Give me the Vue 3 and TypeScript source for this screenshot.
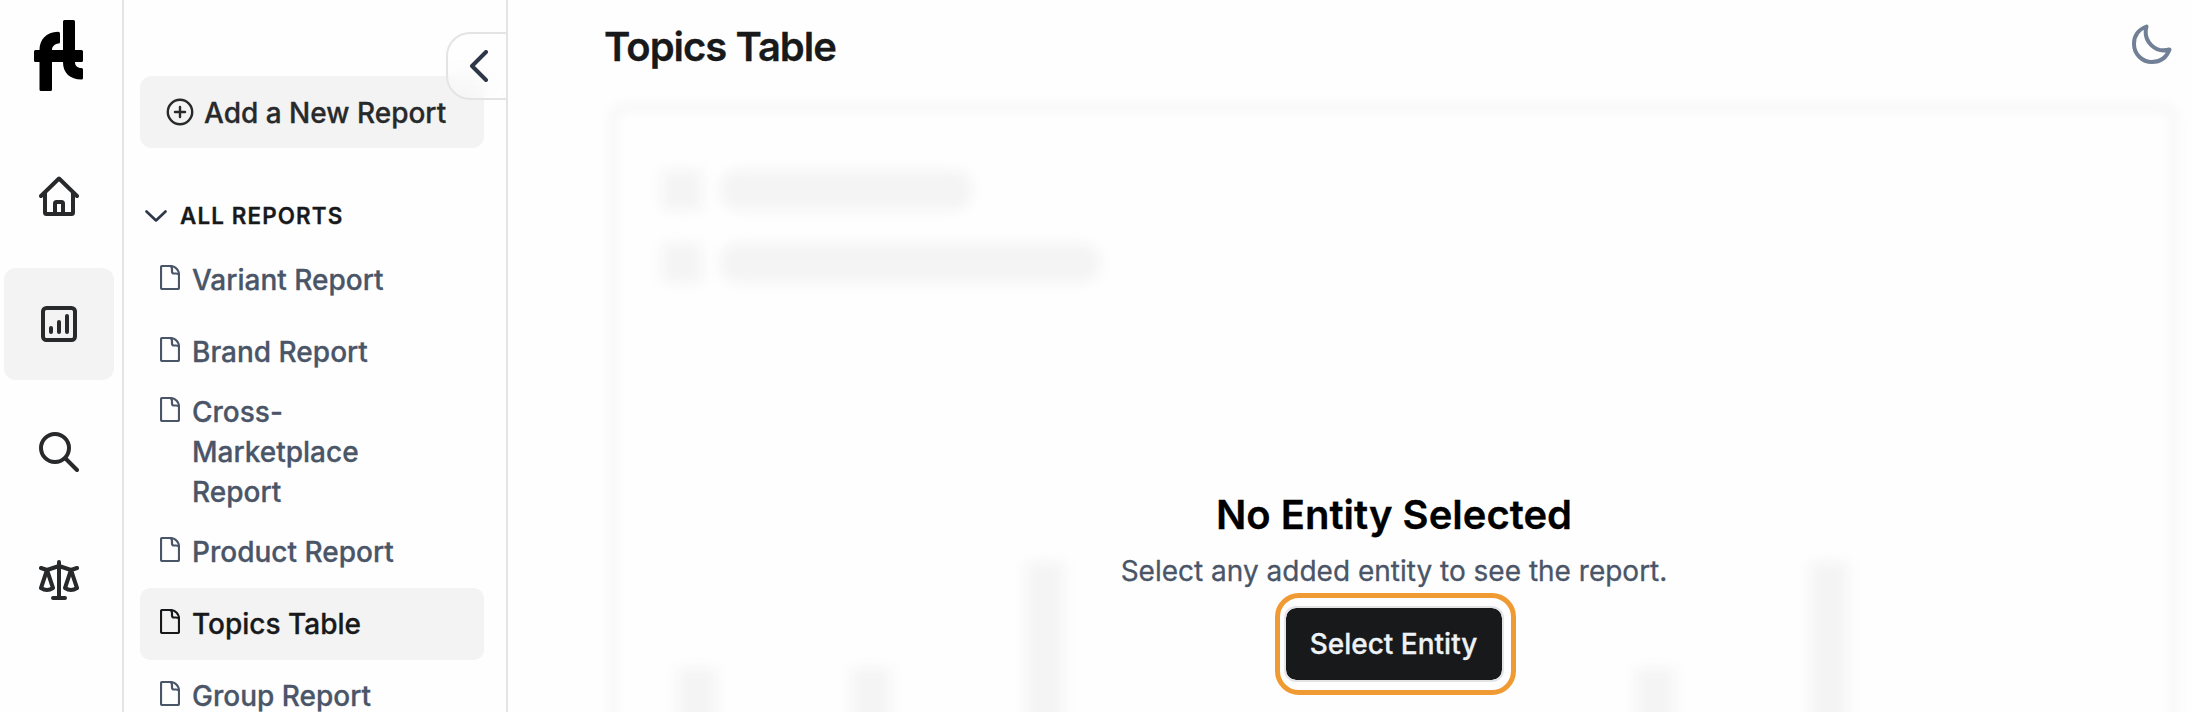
<script setup lang="ts">
interface Report {
  name: string
  active?: boolean
}

const reports: Report[] = [
  { name: 'Variant Report' },
  { name: 'Brand Report' },
  { name: 'Cross-Marketplace Report' },
  { name: 'Product Report' },
  { name: 'Topics Table', active: true },
  { name: 'Group Report' },
]

// Heights of the placeholder chart's columns
const columns: number[] = [
  231, 60, 231, 60, 337, 60, 120, 60, 120, 60, 120, 231, 60, 337, 60, 120, 60,
]
</script>

<template>
  <div class="app">
    <nav class="rail">
      <svg class="logo" viewBox="0 0 49 71" aria-label="Logo">
        <path d="M7 71Q5.500 71 5.500 69.500V42H1.500Q0 42 0 40.500V31.500Q0 30 1.500 30H5.500C5.500 20 12 12 24 11.800Q26 11.800 26 13.500V22Q26 23.500 24.500 23.500C20.500 24 18 26.500 18 30H29V1.500Q29 0 30.500 0H39.500Q41 0 41 1.500V30H47.500Q49 30 49 31.500V40.500Q49 42 47.500 42H41C41 45.500 43 48 47.500 48Q49 48 49 49.500V58Q49 59.500 47.500 59.500C36 59.500 29 53 29 42H18V69.500Q18 71 16.500 71Z" />
      </svg>
      <a class="rail-item">
        <svg viewBox="0 0 40 40">
          <path d="M2 20 20 2.500 38 20M6 17V36.500Q6 38 7.500 38H32.500Q34 38 34 36.500V17" />
          <path d="M16 38V27.500Q16 26 17.500 26H22.500Q24 26 24 27.500V38" />
        </svg>
      </a>
      <a class="rail-item active">
        <svg viewBox="0 0 40 40">
          <rect x="4" y="4" width="32" height="32" rx="3.500" />
          <path d="M12 24V28M20 18V28M28 12V28" />
        </svg>
      </a>
      <a class="rail-item">
        <svg viewBox="0 0 40 40">
          <circle cx="16" cy="16" r="14" />
          <path d="M26.500 26.500 38 38" />
        </svg>
      </a>
      <a class="rail-item">
        <svg viewBox="0 0 40 40">
          <path d="M20 2V38M14 38H26M2 8 8 10 20 6 32 10 38 8" />
          <path d="M8 10 2 28Q8 32 14 28ZM32 10 26 28Q32 32 38 28Z" />
        </svg>
      </a>
    </nav>

    <aside class="sidebar">
      <button class="add">
        <svg viewBox="0 0 28 28">
          <circle cx="14" cy="14" r="12.200" />
          <path d="M14 9V19M9 14H19" />
        </svg>
        <span>Add a New Report</span>
      </button>
      <div class="group">
        <svg viewBox="0 0 22 12"><path d="M1.500 1.500 11 10.500 20.500 1.500" /></svg>
        <span>ALL REPORTS</span>
      </div>
      <ul class="reports">
        <li v-for="r in reports" :key="r.name" :class="{ active: r.active }">
          <svg viewBox="0 0 20 25">
            <path d="M2.500 1H11C15.500 1.500 19 5 19 9.500V22.500Q19 24 17.500 24H2.500Q1 24 1 22.500V2.500Q1 1 2.500 1Z" />
            <path d="M10 1Q12 1.500 12 4V6.500Q12 8.500 14 8.500H16Q18.500 8.500 19 10" />
          </svg>
          <span>{{ r.name }}</span>
        </li>
      </ul>
      <button class="collapse" aria-label="Collapse">
        <svg viewBox="0 0 18 32"><path d="M16 2 2 16 16 30" /></svg>
      </button>
    </aside>

    <main class="main">
      <header>
        <h1>Topics Table</h1>
        <svg class="moon" viewBox="0 0 40 40">
          <path d="M14.500 2.500C6.500 5.500 2 12 2 20C2 30 10 38 20 38C28 38 34.500 33.500 37.500 25.500C23.500 29.500 10.500 17.500 14.500 2.500Z" />
        </svg>
      </header>
      <section class="stage">
        <div class="skeleton">
          <div class="line"><i class="box" /><i class="bar short" /></div>
          <div class="line"><i class="box" /><i class="bar long" /></div>
          <div class="chart">
            <i v-for="(h, i) in columns" :key="i" :style="{ height: h + 'px' }" />
          </div>
        </div>
        <div class="empty">
          <h2>No Entity Selected</h2>
          <p>Select any added entity to see the report.</p>
          <div class="ring"><button>Select Entity</button></div>
        </div>
      </section>
    </main>
  </div>
</template>

<style>
html, body { overflow: hidden; background: #fefefe; }
</style>

<style scoped>
* { box-sizing: border-box; margin: 0; padding: 0; }
.app {
  display: flex;
  width: 2192px;
  height: 712px;
  overflow: hidden;
  background: #fefefe;
  font-family: Inter, "Liberation Sans", sans-serif;
  font-size: 28px;
  line-height: 40px;
  -webkit-text-stroke: 0.300px currentColor;
}
button { font: inherit; border: 0; }
svg { display: block; flex: none; fill: none; stroke: currentColor; stroke-linecap: round; stroke-linejoin: round; }

.rail {
  display: flex;
  flex-direction: column;
  flex: none;
  gap: 16px;
  width: 124px;
  padding: 20px 8px 0 4px;
  border-right: 2px solid #e4e4e4;
}
.logo { width: 49px; height: 71px; margin: 0 0 33px 30px; fill: #000; stroke: none; }
.rail-item {
  display: flex;
  align-items: center;
  justify-content: center;
  width: 110px;
  height: 112px;
  border-radius: 12px;
  color: #28292b;
}
.rail-item.active { background: #f3f3f3; }
.rail-item svg { width: 40px; height: 40px; stroke-width: 4; }

.sidebar {
  position: relative;
  flex: none;
  width: 384px;
  padding: 76px 22px 0 16px;
  border-right: 2px solid #e4e4e4;
}
.add {
  display: flex;
  align-items: center;
  gap: 10px;
  width: 344px;
  height: 72px;
  padding-left: 26px;
  border-radius: 12px;
  background: #f3f3f3;
  color: #28292b;
  font-weight: 500;
  white-space: nowrap;
}
.add svg { width: 28px; height: 28px; stroke-width: 2.400; }
.add span { padding-top: 2px; }
.group {
  display: flex;
  align-items: center;
  gap: 13px;
  margin-top: 48px;
  padding-left: 5px;
  color: #18191b;
  font-size: 22.400px;
  font-weight: 600;
  letter-spacing: 1.120px;
}
.group svg { width: 22px; height: 12px; color: #2d3748; stroke-width: 2.600; }
.reports { margin-top: 8px; list-style: none; }
.reports li {
  display: flex;
  align-items: flex-start;
  gap: 12px;
  width: 344px;
  min-height: 72px;
  padding: 16px 60px 16px 20px;
  border-radius: 10px;
  color: #4a5568;
  font-weight: 500;
}
.reports li:nth-child(3) { padding-top: 4px; padding-bottom: 4px; }
.reports li.active { background: #f3f3f3; color: #18191b; }
.reports svg { width: 20px; height: 25px; margin-top: 5px; stroke-width: 2.200; }
.collapse {
  position: absolute;
  top: 32px;
  right: 0;
  display: flex;
  align-items: center;
  width: 60px;
  height: 68px;
  padding-left: 22px;
  border: 2px solid #e4e4e4;
  border-right: 0;
  border-radius: 24px 0 0 24px;
  background: rgba(255, 255, 255, 0.3);
  backdrop-filter: blur(10px);
  color: #2d3748;
}
.collapse svg { width: 18px; height: 32px; stroke-width: 4; }

.main { flex: 1; padding: 0 14px 0 106px; }
header { display: flex; align-items: flex-start; justify-content: space-between; height: 106px; padding-top: 24px; }
h1 { margin-left: -10px; color: #18191b; font-size: 40px; font-weight: 600; line-height: 46px; letter-spacing: -1px; }
.moon { width: 40px; height: 40px; margin-right: 6px; color: #718096; stroke-width: 4; }

.stage { display: grid; width: 1563px; margin-left: -2px; }
.stage > * { grid-area: 1 / 1; }
.skeleton {
  height: 792px;
  padding: 62px 64px 0 48px;
  border: 2px solid #e0e0e0;
  border-radius: 14px;
  filter: blur(6px);
}
.line { display: flex; gap: 18px; margin-bottom: 33px; }
.line i { height: 40px; background: #f4f4f4; }
.box { width: 40px; }
.bar { border-radius: 18px; }
.short { width: 252px; }
.long { width: 380px; }
.chart { display: flex; align-items: flex-end; justify-content: space-between; height: 583px; padding-left: 16px; }
.chart i { width: 38px; background: #f4f4f4; }

.empty { display: flex; flex-direction: column; align-items: center; padding-top: 385px; margin: 0 -3px 0 -2px; position: relative; }
h2 { color: #000; font-size: 40px; font-weight: 600; line-height: 48px; white-space: nowrap; }
p { margin-top: 12px; color: #4a5568; white-space: nowrap; }
.ring { margin-top: 2px; padding: 8px 7px 8px 4px; border: 5px solid #f09a34; border-radius: 24px; transform: translateX(1px); }
.ring button {
  display: block;
  width: 220px;
  height: 76px;
  border: 2px solid #e4e4e6;
  border-radius: 12px;
  background: #18191b;
  background-clip: padding-box;
  color: #edf2f7;
  font-weight: 500;
}
</style>
